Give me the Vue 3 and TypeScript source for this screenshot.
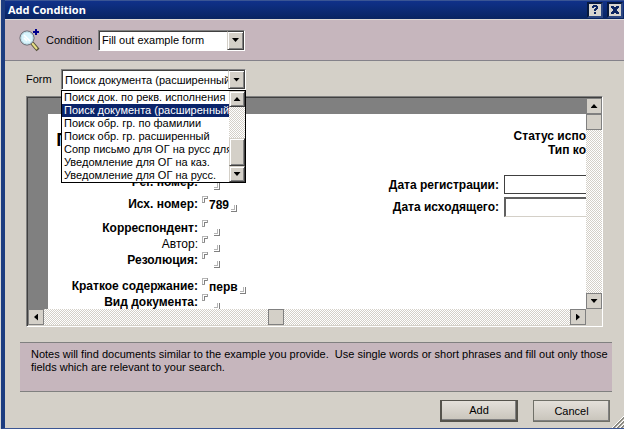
<script setup lang="ts">
import { ref } from 'vue'

interface FieldRow {
  id: string
  label: string
  value: string
  kind: string
}

const condition = ref('Fill out example form')
const forms: string[] = [
  'Поиск док. по рекв. исполнения',
  'Поиск документа (расширенный',
  'Поиск обр. гр. по фамилии',
  'Поиск обр. гр. расширенный',
  'Сопр письмо для ОГ на русс для',
  'Уведомление для ОГ на каз.',
  'Уведомление для ОГ на русс.',
]
const form = ref(forms[1])

const rows = ref<FieldRow[]>([
  { id: 'reg', label: 'Рег. номер:', value: '', kind: '' },
  { id: 'out', label: 'Исх. номер:', value: '789', kind: 'spaced' },
  { id: 'corr', label: 'Корреспондент:', value: '', kind: 'group' },
  { id: 'author', label: 'Автор:', value: '', kind: 'light' },
  { id: 'res', label: 'Резолюция:', value: '', kind: '' },
  { id: 'summary', label: 'Краткое содержание:', value: 'перв', kind: 'section' },
  { id: 'type', label: 'Вид документа:', value: '', kind: '' },
])
</script>

<template>
  <main class="desktop">
    <section class="dialog" role="dialog" aria-labelledby="dialog-title">
      <header class="titlebar">
        <h1 id="dialog-title">Add Condition</h1>
        <button class="caption-btn" type="button" aria-label="Help">
          <svg width="10" height="10" viewBox="0 0 10 10" shape-rendering="crispEdges"><path d="M2 1h1V0h4v1h1v3H7v1H6v1H4V4h1V3h1V2H4v1H2zM4 7h2v2H4z" /></svg>
        </button>
        <button class="caption-btn" type="button" aria-label="Close">
          <svg width="10" height="10" viewBox="0 0 10 10" shape-rendering="crispEdges"><path d="M1 1h3v1h2V1h3v2H8v1H7v2h1v1h1v2H6V8H4v1H1V7h1V6h1V4H2V3H1z" /></svg>
        </button>
      </header>

      <div class="condition-bar">
        <svg class="magnifier" width="22" height="23" viewBox="0 0 22 23">
          <path d="M13 14l6 7" stroke="#55513a" stroke-width="4" />
          <path d="M13 14l5 6" stroke="#e6df86" stroke-width="2" />
          <circle cx="8" cy="9" r="7" fill="#d9f4fc" stroke="#5a5a62" />
          <circle cx="8" cy="9" r="6" fill="none" stroke="#b9dbe6" />
          <path d="M5 6l6 6M5 9l3 3" stroke="#fff" stroke-width="1.500" />
          <path d="M14 2h2V0h2v2h2v2h-2v2h-2V4h-2z" fill="#00008c" shape-rendering="crispEdges" />
        </svg>
        <label for="condition">Condition</label>
        <span class="combo condition-combo">
          <select id="condition" v-model="condition">
            <option>Fill out example form</option>
          </select>
          <span class="combo-arrow"><i class="arrow down"></i></span>
        </span>
      </div>

      <div class="body">
        <div class="form-line">
          <label for="form">Form</label>
          <div class="form-picker">
            <span class="combo">
              <select id="form" v-model="form">
                <option v-for="f in forms" :key="f">{{ f }}</option>
              </select>
              <span class="combo-arrow"><i class="arrow down"></i></span>
            </span>
            <div class="popup">
              <ul role="listbox" aria-label="Form">
                <li
                  v-for="f in forms"
                  :key="f"
                  role="option"
                  :aria-selected="f === form"
                  :class="{ selected: f === form }"
                  @click="form = f"
                >{{ f }}</li>
              </ul>
              <div class="popup-scroll">
                <button type="button" class="raised" aria-label="Scroll up"><i class="arrow up"></i></button>
                <span class="track"></span>
                <span class="popup-thumb raised"></span>
                <button type="button" class="raised" aria-label="Scroll down"><i class="arrow down"></i></button>
              </div>
            </div>
          </div>
        </div>

        <div class="viewer">
          <div class="canvas">
            <div class="sheet">
              <div class="left-fields">
                <h2>П</h2>
                <div v-for="r in rows" :key="r.id" class="field" :class="r.kind">
                  <span class="field-label">{{ r.label }}</span>
                  <span class="slot">
                    <svg class="corner" width="7" height="7" viewBox="0 0 7 7" shape-rendering="crispEdges"><path d="M0 0h6v1H1v6H0z" fill="#b5b5b5" /><path d="M2 2h4v1H3v4H2z" fill="#808080" /><path d="M5 0h1v3H5zM0 6h3v1H0z" fill="#9a9a9a" /></svg>
                    <span class="value">{{ r.value }}</span>
                    <svg class="corner end" width="7" height="7" viewBox="0 0 7 7" shape-rendering="crispEdges"><path d="M3 0h1v5H0V4h3z" fill="#b5b5b5" /><path d="M5 0h1v7H0V6h5z" fill="#808080" /></svg>
                  </span>
                </div>
              </div>
              <div class="right-fields">
                <p class="status">Статус испо</p>
                <p class="status">Тип ко</p>
                <div class="date first">
                  <label for="reg-date">Дата регистрации:</label>
                  <input id="reg-date" class="flat" type="text" />
                </div>
                <div class="date">
                  <label for="out-date">Дата исходящего:</label>
                  <input id="out-date" type="text" />
                </div>
              </div>
            </div>
          </div>
          <div class="vscroll">
            <button type="button" class="scroll-btn" aria-label="Scroll up"><i class="arrow up"></i></button>
            <span class="scroll-btn"></span>
            <span class="track"></span>
            <button type="button" class="scroll-btn" aria-label="Scroll down"><i class="arrow down"></i></button>
          </div>
          <div class="hscroll">
            <button type="button" class="scroll-btn" aria-label="Scroll left"><i class="arrow left"></i></button>
            <span class="track before"></span>
            <span class="scroll-btn"></span>
            <span class="track after"></span>
            <button type="button" class="scroll-btn" aria-label="Scroll right"><i class="arrow right"></i></button>
          </div>
        </div>

        <p class="hint">Notes will find documents similar to the example you provide.&nbsp; Use single words or short phrases and fill out only those fields which are relevant to your search.</p>

        <footer class="actions">
          <button type="button" class="action default">Add</button>
          <button type="button" class="action">Cancel</button>
          <svg class="grip" width="12" height="12" viewBox="0 0 12 12">
            <path d="M0 12L12 0M4 12l8-8M8 12l4-4" stroke="#fff" />
            <path d="M1 12L12 1M2 12L12 2M5 12l7-7M6 12l6-6M9 12l3-3M10 12l2-2" stroke="#8a8880" />
          </svg>
        </footer>
      </div>
    </section>
  </main>
</template>

<style>
body {
  margin: 0;
  background: #d4d0c8;
}
</style>

<style scoped>
* {
  box-sizing: border-box;
}

.desktop {
  padding-left: 1px;
  background: #d8d8d8;
  font: 11px/13px "Liberation Sans", Arial, sans-serif;
  color: #000;
}

.dialog {
  border: solid #3a5594;
  border-width: 0 0 1px 4px;
  border-left-color: #1c3c80;
  background: #d4d0c8;
}

button,
select,
input {
  margin: 0;
  padding: 0;
  border-radius: 0;
  font: inherit;
  color: inherit;
}

.titlebar {
  display: flex;
  align-items: center;
  gap: 4px;
  height: 19px;
  padding: 0 1px 0 3px;
  border-top: 1px solid #3a5594;
  background: linear-gradient(#10318a, #082461);
}

.titlebar h1 {
  flex: 1;
  margin: 0;
  font: bold 11px/16px "Noto Sans", sans-serif;
  color: #fff;
}

.caption-btn {
  display: flex;
  align-items: center;
  justify-content: center;
  width: 16px;
  height: 16px;
  border: 2px solid;
  border-color: #06183e #2c4680 #2c4680 #06183e;
  background: #d8d5ce;
}

.caption-btn path {
  fill: #0b2460;
}

.condition-bar {
  display: flex;
  align-items: center;
  height: 42px;
  padding-left: 14px;
  border-top: 1px solid #dedad5;
  border-bottom: 1px solid #84828a;
  background: #c6b6bd;
}

.condition-bar label {
  width: 52px;
  margin-left: 5px;
}

.combo {
  display: flex;
  height: 21px;
  border: 1px solid;
  border-color: #808080 #fff #fff #808080;
  background: #fff;
}

.condition-combo {
  width: 147px;
}

.combo select {
  flex: 1;
  min-width: 0;
  padding-left: 2px;
  border: solid #404040;
  border-width: 1px 0 0 1px;
  background: #fff;
  appearance: none;
  overflow: hidden;
  text-overflow: clip;
  outline: none;
}

.combo-arrow {
  display: flex;
  align-items: center;
  justify-content: center;
  width: 17px;
  border: 1px solid #404040;
  border-left-color: #d4d0c8;
  background: #d4d0c8;
  box-shadow: inset 1px 1px #fff, inset -1px -1px #808080;
  pointer-events: none;
}

.raised {
  display: flex;
  align-items: center;
  justify-content: center;
  border: 1px solid;
  border-color: #d4d0c8 #404040 #404040 #d4d0c8;
  background: #d4d0c8;
  box-shadow: inset 1px 1px #fff, inset -1px -1px #808080;
}

.arrow {
  width: 7px;
  height: 4px;
  background: #000;
}

.arrow.down {
  clip-path: polygon(0 0, 100% 0, 50% 100%);
}

.arrow.up {
  clip-path: polygon(50% 0, 100% 100%, 0 100%);
}

.arrow.left,
.arrow.right {
  width: 4px;
  height: 7px;
}

.arrow.left {
  clip-path: polygon(100% 0, 100% 100%, 0 50%);
}

.arrow.right {
  clip-path: polygon(0 0, 100% 50%, 0 100%);
}

.track {
  flex: 1;
  background: repeating-conic-gradient(#fff 0 25%, #d4d0c8 0 50%) 0 0 / 2px 2px;
}

.body {
  padding-top: 8px;
}

.form-line {
  display: flex;
  align-items: center;
  padding-left: 21px;
}

.form-line label {
  width: 35px;
}

.form-picker {
  position: relative;
  width: 185px;
}

.popup {
  position: absolute;
  z-index: 2;
  top: 100%;
  left: 0;
  display: flex;
  width: 100%;
  border: 1px solid #000;
  background: #fff;
}

.popup ul {
  flex: 1;
  min-width: 0;
  margin: 0;
  padding: 0;
  list-style: none;
}

.popup li {
  padding-left: 2px;
  overflow: hidden;
  white-space: nowrap;
}

.popup li.selected {
  background: #0a246a;
  color: #fff;
}

.popup-scroll {
  display: flex;
  flex-direction: column;
  width: 16px;
}

.popup-scroll button {
  height: 16px;
}

.popup-thumb {
  height: 28px;
}

.viewer {
  display: grid;
  grid-template-columns: minmax(0, 1fr) 16px;
  grid-template-rows: auto 16px;
  margin: 6px 21px 0;
  border: 1px solid;
  border-color: #808080 #fff #fff #808080;
  box-shadow: inset 1px 1px #404040;
  padding: 1px 0 1px 1px;
}

.canvas {
  height: 211px;
  padding: 16px 0 0 20px;
  overflow: hidden;
  background: #808080;
}

.sheet {
  display: flex;
  height: 100%;
  background: #fff;
  overflow: hidden;
  font: bold 12px/16px "Liberation Sans", Arial, sans-serif;
  white-space: nowrap;
}

.left-fields h2 {
  height: 28px;
  margin: 16px 0 16px 8px;
  font: bold 17px/20px "Noto Sans", sans-serif;
}

.field {
  display: flex;
  height: 16px;
}

.field.spaced {
  margin-top: 6px;
}

.field.group {
  margin-top: 8px;
}

.field.section {
  margin-top: 10px;
}

.field.light {
  font-weight: 400;
}

.field-label {
  width: 150px;
  text-align: right;
}

.slot {
  display: flex;
  margin-left: 4px;
}

.value {
  min-width: 3px;
  padding-top: 1px;
}

.field .end {
  align-self: flex-end;
  margin-left: 2px;
}

.right-fields {
  flex: 1;
  min-width: 0;
  padding-top: 15px;
}

.status {
  margin: 0;
  line-height: 14px;
  text-align: right;
}

.date {
  display: flex;
  align-items: center;
  justify-content: flex-end;
  gap: 5px;
  height: 20px;
  margin-top: 3px;
}

.date.first {
  height: 19px;
  margin-top: 18px;
}

.date input {
  width: 82px;
  height: 100%;
  border: solid #404040;
  border-width: 2px 0 1px 2px;
  border-color: #606060 #fff #d4d0c8 #606060;
  background: #fff;
}

.date input.flat {
  border: solid #404040;
  border-width: 1px 0 1px 1px;
}

.vscroll {
  display: flex;
  flex-direction: column;
}

.hscroll {
  display: flex;
}

.scroll-btn {
  display: flex;
  flex: none;
  align-items: center;
  justify-content: center;
  width: 16px;
  height: 16px;
  border: 1px solid #808080;
  background: #d4d0c8;
}

.track.before {
  flex: 224;
}

.track.after {
  flex: 286;
}

.hint {
  height: 50px;
  margin: 15px 12px 0 15px;
  padding: 5px 0 0 11px;
  border: solid #808080;
  border-width: 1px 0;
  background: #c6b6bd;
}

.actions {
  display: flex;
  justify-content: flex-end;
  height: 36px;
  padding-top: 8px;
}

.action {
  width: 77px;
  height: 22px;
  margin-right: 15px;
  border: 1px solid #707068;
  background: linear-gradient(#e4e0da, #c8c4bb);
  box-shadow: inset -1px -1px #808080;
}

.action.default {
  width: 78px;
  border: 2px solid #55534c;
  border-top-width: 1px;
}

.action + .grip {
  align-self: flex-end;
  margin-left: -13px;
}
</style>
